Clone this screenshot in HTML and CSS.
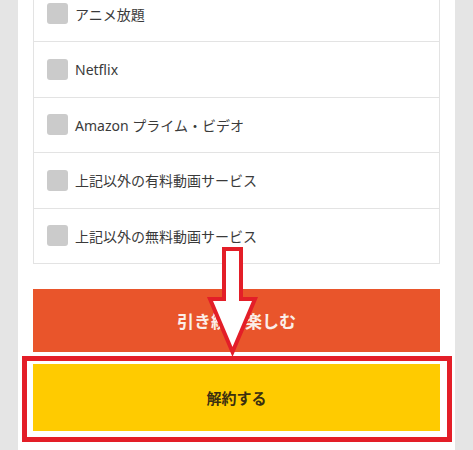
FILE: index.html
```html
<!DOCTYPE html>
<html lang="ja">
<head>
<meta charset="utf-8">
<title>解約</title>
<link rel="stylesheet" href="styles.css">
</head>
<body>
<div class="page">
  <div class="list">
    <label class="row"><span class="check"></span><span class="label">アニメ放題</span></label>
    <label class="row"><span class="check"></span><span class="label">Netflix</span></label>
    <label class="row"><span class="check"></span><span class="label">Amazon プライム・ビデオ</span></label>
    <label class="row"><span class="check"></span><span class="label">上記以外の有料動画サービス</span></label>
    <label class="row"><span class="check"></span><span class="label">上記以外の無料動画サービス</span></label>
  </div>
  <div class="actions">
    <div class="btn btn-continue">引き続き楽しむ</div>
    <div class="btn btn-cancel">解約する</div>
  </div>
</div>
<div class="highlight"></div>
<svg class="arrow" width="473" height="450" viewBox="0 0 473 450" aria-hidden="true">
  <polygon points="224,249 241,249 241,299 255,299 232.5,352 210,299 224,299" fill="#fff" stroke="#e31e28" stroke-width="4" stroke-linejoin="miter" stroke-miterlimit="10"/>
</svg>
</body>
</html>
```

FILE: styles.css
```css
html, body {
  margin: 0;
  padding: 0;
}
body {
  background: #e5e5e5;
  font-family: "Noto Sans", "Noto Sans CJK JP", sans-serif;
  overflow: hidden;
  height: 450px;
}
.page {
  margin: -14.5px 18px 0;
  background: #fff;
  padding: 0 15px 40px;
}
.list {
  border: 1px solid #e3e3e3;
}
.row {
  display: flex;
  align-items: center;
  gap: 7px;
  height: 54.5px;
  padding-left: 13px;
}
.row + .row {
  border-top: 1px solid #e3e3e3;
}
.check {
  width: 21px;
  height: 21px;
  border-radius: 3px;
  background: #cbcbcb;
  flex: none;
}
.label {
  font-size: 14px;
  color: #3a3a3a;
}
.actions {
  margin-top: 25px;
  display: flex;
  flex-direction: column;
  gap: 12px;
}
.btn {
  display: flex;
  align-items: center;
  justify-content: center;
  font-weight: bold;
  font-family: "Noto Sans CJK JP", sans-serif;
}
.btn-continue {
  height: 63px;
  background: #e9552b;
  color: #fbeee8;
  font-size: 17px;
}
.btn-cancel {
  height: 67px;
  background: #ffcb00;
  color: #3b2f10;
  font-size: 15px;
}
.highlight {
  position: absolute;
  left: 22px;
  top: 356px;
  width: 430px;
  height: 86px;
  box-sizing: border-box;
  border: 5px solid #e31e28;
}
.arrow {
  position: absolute;
  left: 0;
  top: 0;
}
```
